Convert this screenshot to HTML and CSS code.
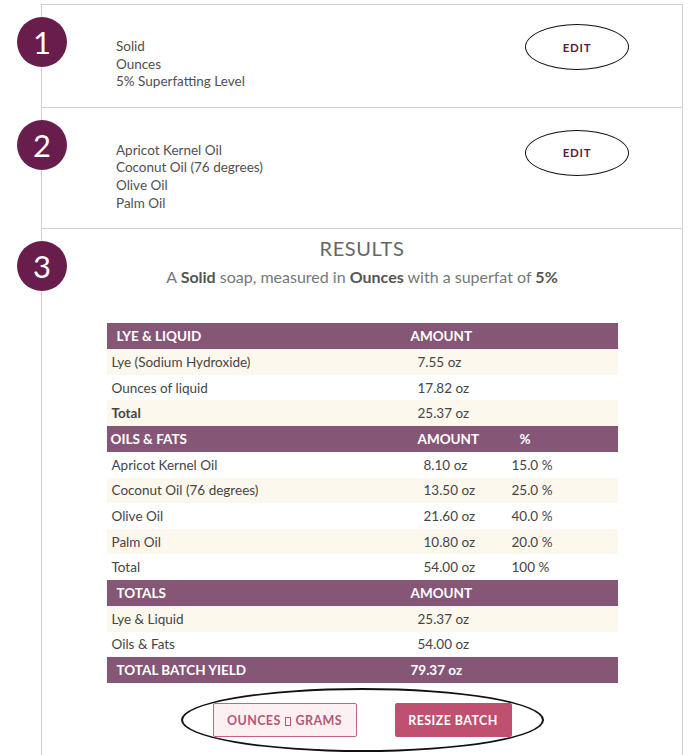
FILE: index.html
```html
<!DOCTYPE html>
<html lang="en">
<head>
<meta charset="utf-8">
<title>Soap Calculator Results</title>
<link rel="stylesheet" href="styles.css">
</head>
<body>
<div class="steps">
  <section class="step step-one">
    <div class="badge">1</div>
    <ul class="summary">
      <li>Solid</li>
      <li>Ounces</li>
      <li>5% Superfatting Level</li>
    </ul>
    <button class="edit">EDIT</button>
  </section>

  <section class="step step-two">
    <div class="badge">2</div>
    <ul class="summary">
      <li>Apricot Kernel Oil</li>
      <li>Coconut Oil (76 degrees)</li>
      <li>Olive Oil</li>
      <li>Palm Oil</li>
    </ul>
    <button class="edit">EDIT</button>
  </section>

  <section class="step step-results">
    <div class="badge">3</div>
    <h2 class="results-title">RESULTS</h2>
    <p class="results-sub">A <strong>Solid</strong> soap, measured in <strong>Ounces</strong> with a superfat of <strong>5%</strong></p>

    <div class="table">
      <div class="trow head two"><span class="h1 wide">LYE &amp; LIQUID</span><span class="hc">AMOUNT</span></div>
      <div class="trow two cream"><span class="c1">Lye (Sodium Hydroxide)</span><span class="vc">7.55 oz</span></div>
      <div class="trow two"><span class="c1">Ounces of liquid</span><span class="vc">17.82 oz</span></div>
      <div class="trow two cream"><span class="c1 bold">Total</span><span class="vc">25.37 oz</span></div>

      <div class="trow head three"><span class="h1">OILS &amp; FATS</span><span class="hc">AMOUNT</span><span class="hp">%</span></div>
      <div class="trow three"><span class="c1">Apricot Kernel Oil</span><span class="vc2">8.10 oz</span><span class="vp">15.0 %</span></div>
      <div class="trow three cream"><span class="c1">Coconut Oil (76 degrees)</span><span class="vc2">13.50 oz</span><span class="vp">25.0 %</span></div>
      <div class="trow three"><span class="c1">Olive Oil</span><span class="vc2">21.60 oz</span><span class="vp">40.0 %</span></div>
      <div class="trow three cream"><span class="c1">Palm Oil</span><span class="vc2">10.80 oz</span><span class="vp">20.0 %</span></div>
      <div class="trow three"><span class="c1">Total</span><span class="vc2">54.00 oz</span><span class="vp">100 %</span></div>

      <div class="trow head two"><span class="h1 wide">TOTALS</span><span class="hc">AMOUNT</span></div>
      <div class="trow two cream"><span class="c1">Lye &amp; Liquid</span><span class="vc">25.37 oz</span></div>
      <div class="trow two"><span class="c1">Oils &amp; Fats</span><span class="vc">54.00 oz</span></div>
      <div class="trow head two"><span class="h1 wide">TOTAL BATCH YIELD</span><span class="hc">79.37 oz</span></div>
    </div>

    <div class="actions">
      <button class="btn-outline">OUNCES <span class="tofu"></span> GRAMS</button>
      <button class="btn-solid">RESIZE BATCH</button>
    </div>
  </section>
</div>
</body>
</html>
```

FILE: styles.css
```css
* { box-sizing: border-box; }

body {
  margin: 0;
  background: #ffffff;
  font-family: Lato, "Open Sans", "Liberation Sans", sans-serif;
  color: #555555;
}

.steps {
  margin: 4px 0 0 41px;
  width: 642px;
  border: 1px solid #cfcfcf;
  border-bottom: none;
  min-height: 760px;
}

.step {
  position: relative;
  display: flex;
  align-items: flex-start;
  justify-content: space-between;
  border-bottom: 1px solid #cfcfcf;
}

.step-one { padding: 19px 53px 16px 74px; }
.step-one .summary { margin-top: 14px; }

.step-two { padding: 22px 53px 16px 74px; }
.step-two .summary { margin-top: 12px; }

.badge {
  position: absolute;
  left: -25px;
  top: 12px;
  width: 50px;
  height: 50px;
  border-radius: 50%;
  background: #681d4d;
  color: #ffffff;
  font-size: 31px;
  font-weight: 400;
  line-height: 50px;
  text-align: center;
}

.summary {
  list-style: none;
  margin: 0;
  padding: 0;
  font-size: 13.5px;
  line-height: 17.6px;
  color: #505050;
}

.edit {
  width: 104px;
  height: 46px;
  border: 1.5px solid #111111;
  border-radius: 50%;
  background: #ffffff;
  font-family: Lato, "Open Sans", sans-serif;
  font-weight: 700;
  font-size: 11.5px;
  letter-spacing: 0.7px;
  color: #5a1e45;
  padding: 0;
}

.step-results {
  display: block;
  border-bottom: none;
  padding: 7px 0 0;
  text-align: center;
}

.results-title {
  margin: 0;
  font-size: 20px;
  line-height: 24px;
  font-weight: 400;
  letter-spacing: 0.6px;
  color: #666666;
}

.results-sub {
  margin: 6px 0 36px;
  font-size: 16px;
  line-height: 21px;
  color: #777777;
}

.results-sub strong { color: #555555; font-weight: 700; }

.table {
  width: 511px;
  margin: 0 auto;
  text-align: left;
}

.trow {
  display: grid;
  align-items: center;
  height: 25.6px;
  font-size: 13.5px;
  color: #454545;
  background: #ffffff;
}

.trow.cream { background: #fdf8ee; }

.two { grid-template-columns: 300px 1fr; }
.three { grid-template-columns: 307px 94px 1fr; }

.trow.head {
  height: 26px;
  background: #855676;
  color: #ffffff;
  font-weight: 700;
  font-size: 13.5px;
}

.h1 { padding-left: 4px; }
.h1.wide { padding-left: 10px; }
.hc { padding-left: 4px; }
.hp { padding-left: 12px; }

.c1 { padding-left: 5px; }
.bold { font-weight: 700; }
.vc { padding-left: 11px; }
.vc2 { padding-left: 10px; }
.vp { padding-left: 4px; }

.actions {
  width: 363px;
  height: 64px;
  margin: 5px auto 0;
  border: 2px solid #111111;
  border-radius: 50%;
  display: flex;
  align-items: center;
  justify-content: center;
  gap: 38px;
}

.btn-outline,
.btn-solid {
  height: 34px;
  font-family: Lato, "Open Sans", sans-serif;
  font-weight: 700;
  font-size: 12.5px;
  letter-spacing: 0.4px;
  border-radius: 2px;
  padding: 0;
}

.btn-outline {
  width: 144px;
  background: #fcf0f2;
  border: 1px solid #c4647f;
  color: #b65776;
}

.btn-solid {
  width: 117px;
  background: #c0506f;
  border: none;
  color: #ffffff;
}

.tofu {
  display: inline-block;
  width: 6px;
  height: 9px;
  border: 1px solid currentColor;
  vertical-align: -1px;
  margin: 0 1px;
}
```
